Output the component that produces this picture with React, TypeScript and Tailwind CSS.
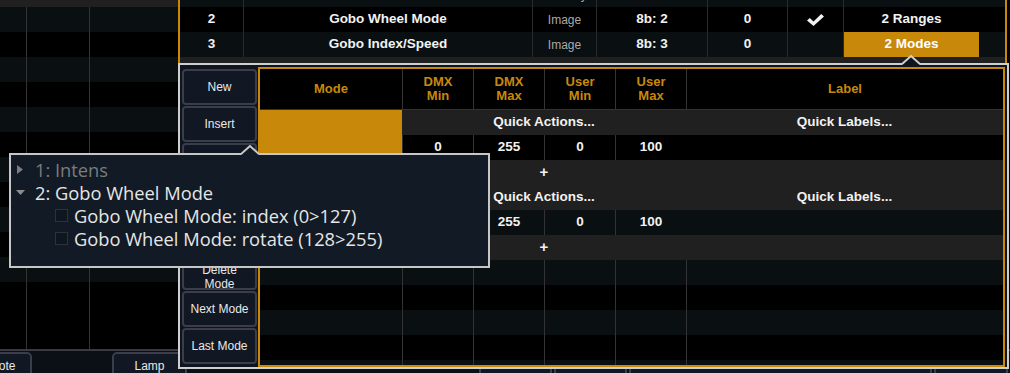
import React from 'react';

// Upper patch table rows (partially hidden behind the mode editor popup)
const upperRows = [
  { n: '1', name: 'Intens', type: 'Intensity', addr: '8b: 1', home: '0', check: false, ranges: '', bg: 'bg-[#0a0f12]', selected: false },
  { n: '2', name: 'Gobo Wheel Mode', type: 'Image', addr: '8b: 2', home: '0', check: true, ranges: '2 Ranges', bg: 'bg-black', selected: false },
  { n: '3', name: 'Gobo Index/Speed', type: 'Image', addr: '8b: 3', home: '0', check: false, ranges: '2 Modes', bg: 'bg-[#0a0f12]', selected: true },
];

const modeButtons = ['New', 'Insert', 'Copy', 'Move Up', 'Move Down'];

const CheckMark: React.FC = () => (
  <svg width="17" height="12" viewBox="0 0 17 12">
    <polygon points="0,6.5 2.8,4 6.5,7.4 14.2,0 17,2.6 6.5,12" fill="#f2f2f2" />
  </svg>
);

// Left background grid with striped rows
const LeftGrid: React.FC = () => (
  <div className="w-[178px] shrink-0 flex flex-col">
    <div className="h-[7px] shrink-0 bg-[#202020]" />
    {Array.from({ length: 12 }, (_, i) => (
      <div key={i} className={`h-[25px] shrink-0 flex ${i % 2 === 0 ? 'bg-[#0a0f12]' : 'bg-black'}`}>
        <div className="w-[26px]" />
        <div className="w-[63px] border-l border-[#333]" />
        <div className="flex-1 border-l border-[#333]" />
      </div>
    ))}
    <div className="flex-1 flex bg-black">
      <div className="w-[26px]" />
      <div className="w-[63px] border-l border-[#333]" />
      <div className="flex-1 border-l border-[#333]" />
    </div>
  </div>
);

const UpperTable: React.FC = () => (
  <div className="w-[829px] shrink-0 border-x-2 border-[#c8890a] flex flex-col overflow-hidden">
    <div className="-mt-[18px]">
      {upperRows.map((r) => (
        <div
          key={r.n}
          className={`grid grid-cols-[63px_289px_64px_111px_80px_56px_136px_26px] h-[25px] ${r.bg} text-[13.5px] font-bold text-[#f2f2f2]`}
        >
          <div className="flex items-center justify-center">{r.n}</div>
          <div className="flex items-center justify-center border-l border-[#2a2a2a]">{r.name}</div>
          <div className="flex items-center justify-center border-l border-[#2a2a2a] font-normal text-[12px] text-[#a9a9a9]">{r.type}</div>
          <div className="flex items-center justify-center border-l border-[#2a2a2a]">{r.addr}</div>
          <div className="flex items-center justify-center border-l border-[#2a2a2a]">{r.home}</div>
          <div className="flex items-center justify-center border-l border-[#2a2a2a]">{r.check && <CheckMark />}</div>
          <div className={`flex items-center justify-center border-l border-[#2a2a2a] ${r.selected ? 'bg-[#c8890a] text-white' : ''}`}>{r.ranges}</div>
          <div />
        </div>
      ))}
    </div>
    <div className="flex-1 bg-[#202020]" />
  </div>
);

const BottomBar: React.FC = () => (
  <div className="h-[24px] border-t-2 border-[#3a3a44] bg-[#0b1017] flex items-start text-[12px] text-[#e8e8e8]">
    <div className="-ml-[43px] mt-px w-[75px] h-[28px] shrink-0 rounded-t-[5px] border-2 border-[#3b3d4b] bg-[#111823] flex justify-center pt-[3px]">Remote</div>
    <div className="ml-[80px] mt-px w-[75px] h-[28px] shrink-0 rounded-t-[5px] border-2 border-[#3b3d4b] bg-[#111823] flex justify-center pt-[3px]">Lamp</div>
    <div className="ml-[292px] mt-px w-[73px] h-[28px] shrink-0 rounded-t-[5px] border-2 border-[#3b3d4b] bg-[#111823]" />
    <div className="ml-[2px] mt-px w-[73px] h-[28px] shrink-0 rounded-t-[5px] border-2 border-[#3b3d4b] bg-[#111823]" />
    <div className="ml-[2px] mt-px w-[303px] h-[28px] shrink-0 rounded-t-[5px] border-2 border-[#3b3d4b] bg-[#111823]" />
    <div className="ml-[2px] mt-px w-[74px] h-[28px] shrink-0 rounded-t-[5px] border-2 border-[#3b3d4b] bg-[#111823]" />
  </div>
);

const ModeButton: React.FC<{ children: React.ReactNode; className?: string }> = ({ children, className }) => (
  <div
    className={`h-[36px] shrink-0 rounded-[4px] border-2 border-[#3b3d4b] bg-[#111823] text-[#e8e8e8] text-[12px] leading-[14px] flex flex-col items-center text-center overflow-hidden ${className ?? 'justify-center'}`}
  >
    {children}
  </div>
);

const ModeTable: React.FC = () => {
  const head = 'flex items-center justify-center text-center border-l border-[#333]';
  const val = 'flex items-center justify-center border-l border-[#333]';
  return (
    <div className="ml-px flex-1 border-2 border-[#c8890a] bg-black overflow-hidden text-[13.5px] font-bold text-[#f2f2f2]">
      <div className="grid grid-cols-[142px_71px_71px_71px_71px_1fr] h-[41px] border-b border-[#333] text-[13px] leading-[14px] text-[#c8890a]">
        <div className="flex items-center justify-center">Mode</div>
        <div className={head}>DMX<br />Min</div>
        <div className={head}>DMX<br />Max</div>
        <div className={head}>User<br />Min</div>
        <div className={head}>User<br />Max</div>
        <div className={head}>Label</div>
      </div>
      <div className="grid grid-cols-[142px_71px_71px_71px_71px_1fr] auto-rows-[25px]">
        {/* mode 1 */}
        <div className="row-span-3 bg-[#c8890a]" />
        <div className="col-span-4 bg-[#202020] flex items-center justify-center">Quick Actions...</div>
        <div className="bg-[#202020] flex items-center justify-center">Quick Labels...</div>
        <div className={val}>0</div>
        <div className={val}>255</div>
        <div className={val}>0</div>
        <div className={val}>100</div>
        <div />
        <div className="col-span-4 bg-[#202020] flex items-center justify-center text-[15px]">+</div>
        <div className="bg-[#202020]" />
        {/* mode 2 */}
        <div className="row-span-3 bg-[#202020]" />
        <div className="col-span-4 bg-[#202020] flex items-center justify-center">Quick Actions...</div>
        <div className="bg-[#202020] flex items-center justify-center">Quick Labels...</div>
        <div className={`${val} bg-[#0a0f12]`}>0</div>
        <div className={`${val} bg-[#0a0f12]`}>255</div>
        <div className={`${val} bg-[#0a0f12]`}>0</div>
        <div className={`${val} bg-[#0a0f12]`}>100</div>
        <div className="bg-[#0a0f12]" />
        <div className="col-span-4 bg-[#202020] flex items-center justify-center text-[15px]">+</div>
        <div className="bg-[#202020]" />
        {/* empty rows */}
        {Array.from({ length: 5 }, (_, i) => {
          const bg = i % 2 === 0 ? 'bg-[#0a0f12]' : 'bg-black';
          return (
            <React.Fragment key={i}>
              <div className={bg} />
              <div className={`${bg} border-l border-[#333]`} />
              <div className={`${bg} border-l border-[#333]`} />
              <div className={`${bg} border-l border-[#333]`} />
              <div className={`${bg} border-l border-[#333]`} />
              <div className={`${bg} border-l border-[#333]`} />
            </React.Fragment>
          );
        })}
      </div>
    </div>
  );
};

const ModePopup: React.FC = () => (
  <div className="absolute left-[178px] top-[63px] w-[831px] h-[306px] border-2 border-[#cfcfcf] bg-[#0e151e] flex pt-[2px] pr-[2px] pl-[2px]">
    <div className="w-[75px] shrink-0 pt-[2px] flex flex-col gap-px">
      {modeButtons.map((b) => (
        <ModeButton key={b}>{b}</ModeButton>
      ))}
      <ModeButton className="justify-start pt-[7px]">
        <span>Delete</span>
        <span>Mode</span>
      </ModeButton>
      <ModeButton>Next Mode</ModeButton>
      <ModeButton>Last Mode</ModeButton>
    </div>
    <ModeTable />
  </div>
);

const ParameterMenu: React.FC = () => (
  <div className="absolute left-[9px] top-[153px] w-[481px] h-[115px] border-2 border-[#c7c7c7] bg-[#111a25] pt-[3px] font-['Open_Sans',sans-serif] text-[18.3px] leading-[23px] text-[#e6e6e6]">
    <div className="flex items-center h-[23px] text-[#7c7c7c]">
      <span className="w-[24px] shrink-0 pl-[6px] flex items-center">
        <svg width="6" height="9" viewBox="0 0 6 9"><polygon points="0,0 6,4.5 0,9" fill="#7c7c7c" /></svg>
      </span>
      1: Intens
    </div>
    <div className="flex items-center h-[23px]">
      <span className="w-[24px] shrink-0 pl-[5px] flex items-center">
        <svg width="9" height="5" viewBox="0 0 9 5"><polygon points="0,0 9,0 4.5,5" fill="#8c8c8c" /></svg>
      </span>
      2: Gobo Wheel Mode
    </div>
    {['Gobo Wheel Mode: index (0>127)', 'Gobo Wheel Mode: rotate (128>255)'].map((t) => (
      <div key={t} className="flex items-center h-[23px]">
        <span className="ml-[44px] mr-[6px] w-[13px] h-[13px] shrink-0 border border-[#2a323e] bg-[#0e1620]" />
        {t}
      </div>
    ))}
  </div>
);

const App: React.FC = () => {
  return (
    <div className="relative w-[1010px] h-[373px] overflow-hidden bg-black font-['Liberation_Sans',Arial,sans-serif] select-none">
      <div className="flex h-[349px]">
        <LeftGrid />
        <UpperTable />
        <div className="flex-1 bg-black" />
      </div>
      <BottomBar />

      <ModePopup />
      {/* pointer from popup to the selected "2 Modes" cell */}
      <svg className="absolute left-[902px] top-[55px]" width="18" height="10" viewBox="0 0 18 10">
        <polygon points="0,10 9,1 18,10" fill="#0e151e" />
        <polyline points="0,9 9,1 18,9" fill="none" stroke="#cfcfcf" strokeWidth="2" />
      </svg>

      <ParameterMenu />
      <svg className="absolute left-[241px] top-[145px]" width="18" height="10" viewBox="0 0 18 10">
        <polygon points="0,10 9,1 18,10" fill="#111a25" />
        <polyline points="0,9 9,1 18,9" fill="none" stroke="#c7c7c7" strokeWidth="2" />
      </svg>
    </div>
  );
};

export default App;
